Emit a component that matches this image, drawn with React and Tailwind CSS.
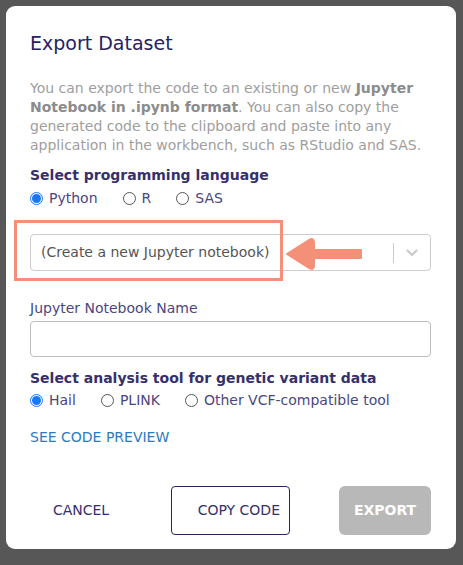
import React from "react";

const Radio = ({ label, checked }) => (
  <label className="flex items-center gap-[6px]">
    <span
      className={
        checked
          ? "flex h-[13px] w-[13px] items-center justify-center rounded-full border border-[#1677ff]"
          : "h-[13px] w-[13px] rounded-full border border-[#555]"
      }
    >
      {checked && <span className="h-[9px] w-[9px] rounded-full bg-[#1677ff]" />}
    </span>
    <span className="text-[#4b4682]">{label}</span>
  </label>
);

export default function App() {
  return (
    <div
      className="h-[565px] w-[463px] overflow-hidden bg-[#575757] pt-[6px] pl-[6px]"
      style={{ fontFamily: '"DejaVu Sans", sans-serif' }}
    >
      <div className="relative w-[450px] rounded-[9px] bg-white pl-[24px] pr-[25px] pt-[23px] pb-[14px] text-[14px] leading-[19px]">
        <h2 className="text-[19px] leading-[28px] text-[#27235f]">Export Dataset</h2>

        <p className="mt-[22px] text-[#9e9e9e]">
          You can export the code to an existing or new{" "}
          <span className="font-bold text-[#8c8c8c]">Jupyter Notebook in .ipynb format</span>. You can also copy the
          generated code to the clipboard and paste into any application in the workbench, such as RStudio and SAS.
        </p>

        <div className="mt-[11px] font-semibold text-[#35306b]">Select programming language</div>
        <div className="mt-[4px] flex gap-[25px]">
          <Radio label="Python" checked />
          <Radio label="R" />
          <Radio label="SAS" />
        </div>

        <div className="mt-[26px] flex h-[37px] items-center rounded-[4px] border border-[#cccccc]">
          <span className="flex-1 pl-[10px] text-[#555]">(Create a new Jupyter notebook)</span>
          <span className="h-[20px] w-px bg-[#cccccc]" />
          <span className="flex w-[36px] justify-center">
            <svg width="12" height="8" viewBox="0 0 12 8" fill="none">
              <path d="M1.5 1.5 6 6l4.5-4.5" stroke="#c8c8c8" strokeWidth="2" strokeLinecap="round" />
            </svg>
          </span>
        </div>

        <div className="mt-[28px] text-[#4b4682]">Jupyter Notebook Name</div>
        <div className="mt-[3px] h-[36px] rounded-[4px] border border-[#bdbdbd]" />

        <div className="mt-[12px] font-semibold text-[#35306b]">Select analysis tool for genetic variant data</div>
        <div className="mt-[3px] flex gap-[25px]">
          <Radio label="Hail" checked />
          <Radio label="PLINK" />
          <Radio label="Other VCF-compatible tool" />
        </div>

        <div className="mt-[18px] text-[#2b7bc0]">SEE CODE PREVIEW</div>

        <div className="mt-[39px] flex items-center">
          <button className="flex h-[49px] w-[102px] items-center justify-center text-[#35306b]">CANCEL</button>
          <button className="ml-[39px] flex h-[49px] w-[119px] items-center justify-end rounded-[4px] border border-[#27235f] pr-[9px] text-[#35306b]">
            COPY CODE
          </button>
          <button className="ml-auto flex h-[49px] w-[92px] items-center justify-center rounded-[6px] bg-[#b8b8b8] font-semibold text-white">
            EXPORT
          </button>
        </div>

        {/* annotation overlay */}
        <div className="absolute left-[8px] top-[214px] h-[61px] w-[269px] border-[3px] border-[#f48f78]" />
        <svg className="absolute left-[277px] top-[231px]" width="80" height="34" viewBox="0 0 80 34">
          <path
            d="M4 17 L26 3 Q31 0 31 6 L31 13 L78 13 L78 21 L31 21 L31 28 Q31 34 26 31 Z"
            fill="#f48f78"
            stroke="#f48f78"
            strokeLinejoin="round"
            strokeWidth="2"
          />
        </svg>
      </div>
    </div>
  );
}
